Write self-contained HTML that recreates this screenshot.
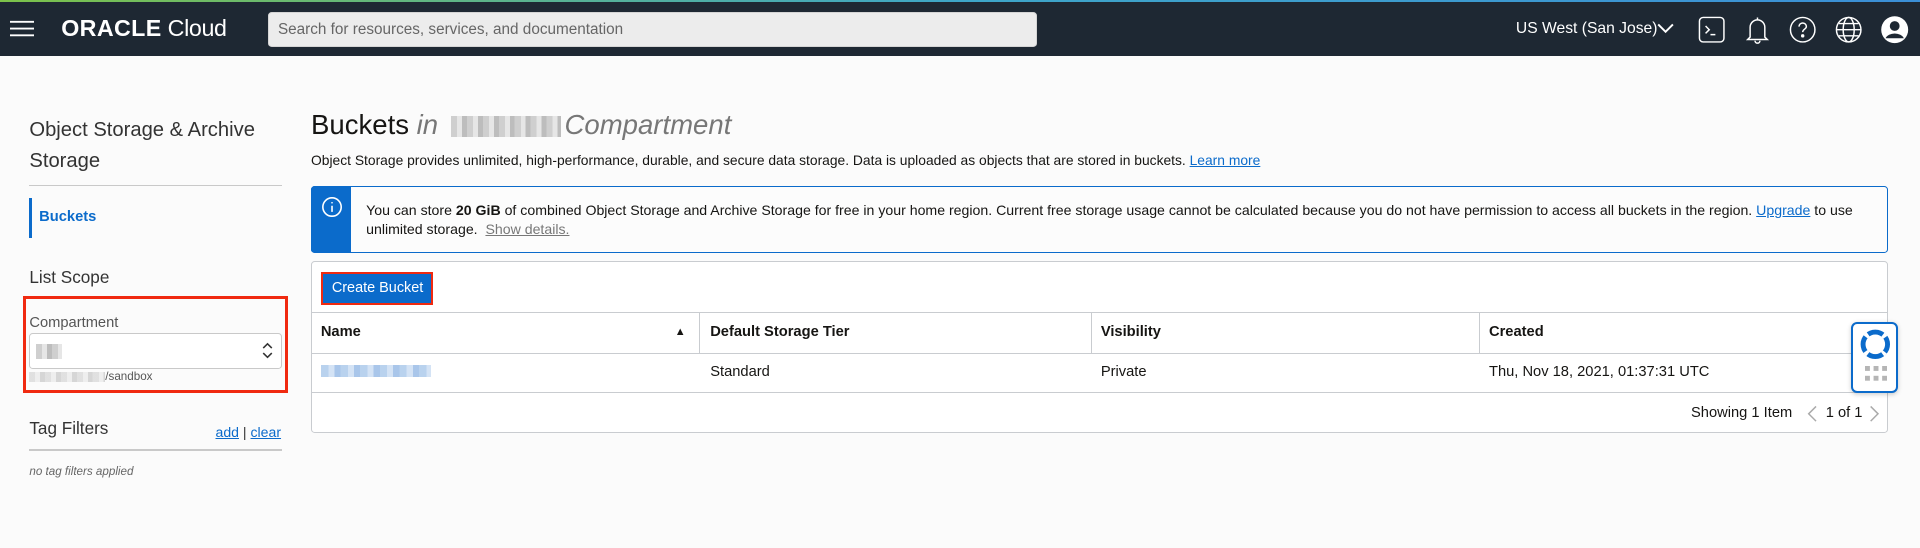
<!DOCTYPE html>
<html><head><meta charset="utf-8">
<style>
*{box-sizing:border-box;margin:0;padding:0}
html,body{width:1920px;height:548px;overflow:hidden;background:#fbfbfb}
#w{width:1568px;height:448px;zoom:1.22449;position:relative;font-family:"Liberation Sans",sans-serif;color:#161513;background:#fbfbfb}
.a{position:absolute;white-space:nowrap}
.top{position:absolute;left:0;top:0;width:1568px;height:46px;background:#1e2833}
.grad{position:absolute;left:0;top:0;width:1568px;height:2px;background:linear-gradient(90deg,#7cc24a,#3ea6c8,#3b8fd6)}
.blur{background:repeating-linear-gradient(90deg,#cfcfcf 0 5px,#e6e6e6 5px 9px,#bdbdbd 9px 13px)}
.bblur{background:repeating-linear-gradient(90deg,#b9d2ee 0 6px,#d4e3f5 6px 11px,#a9c6ea 11px 16px)}
a{color:#0b6bcb}
.th{font-weight:bold;font-size:12px;top:265px}
.td{font-size:12px;top:297px}
</style></head><body><div id="w">
<div class="top"></div><div class="grad"></div>
<svg class="a" style="left:8px;top:16px" width="20" height="14"><path d="M0 1.5h20M0 7h20M0 12.5h20" stroke="#fff" stroke-width="1.5"/></svg>
<div class="a" style="left:50px;top:12px;color:#fff;font-size:19px;font-weight:bold;letter-spacing:0.3px">ORACLE<span style="font-weight:normal;letter-spacing:-0.3px"> Cloud</span></div>
<div class="a" style="left:219px;top:10px;width:628px;height:28px;background:#ececec;border-radius:3px;border:1px solid #d5d5d5"></div>
<div class="a" style="left:227px;top:17px;font-size:12.5px;color:#666">Search for resources, services, and documentation</div>
<div class="a" style="left:1238px;top:16px;font-size:12.8px;color:#fff">US West (San Jose)</div>
<svg class="a" style="left:1353px;top:18px" width="14" height="10"><path d="M1 2l6 6 6-6" stroke="#fff" stroke-width="1.6" fill="none"/></svg>
<svg class="a" style="left:1386px;top:12px" width="24" height="24" fill="none" stroke="#fff" stroke-width="1.2"><rect x="2" y="2" width="20" height="20" rx="3"/><path d="M7 9l3 3-3 3M11 16h4"/></svg>
<svg class="a" style="left:1424px;top:12px" width="22" height="24" fill="none" stroke="#fff" stroke-width="1.2"><path d="M5 18V10a6 6 0 0112 0v8l2 2H3z M11 2v2 M9 21a2 2 0 004 0"/></svg>
<svg class="a" style="left:1460px;top:12px" width="24" height="24" fill="none" stroke="#fff" stroke-width="1.2"><circle cx="12" cy="12" r="10"/><path d="M9 9.5a3 3 0 116 0c0 2-3 2-3 4.5"/><circle cx="12" cy="17" r=".8" fill="#fff"/></svg>
<svg class="a" style="left:1498px;top:12px" width="24" height="24" fill="none" stroke="#fff" stroke-width="1.2"><circle cx="12" cy="12" r="10"/><ellipse cx="12" cy="12" rx="4.5" ry="10"/><path d="M2 12h20M4 7h16M4 17h16"/></svg>
<svg class="a" style="left:1535px;top:12px" width="24" height="24"><circle cx="12" cy="12" r="11" fill="#fff"/><circle cx="12" cy="9" r="4" fill="#1e2833"/><path d="M4.5 19a8 6 0 0115 0" fill="#1e2833"/></svg>

<div class="a" style="left:24px;top:94px;font-size:16.5px;line-height:25px;color:#333;white-space:normal;width:200px">Object Storage &amp; Archive Storage</div>
<div class="a" style="left:24px;top:151px;width:206px;height:1px;background:#c9c9c9"></div>
<div class="a" style="left:24px;top:162px;width:2px;height:32px;background:#0b6bcb"></div>
<div class="a" style="left:32px;top:171px;font-size:12px;font-weight:bold;color:#0b6bcb">Buckets</div>
<div class="a" style="left:24px;top:218px;font-size:14px;color:#333">List Scope</div>
<div class="a" style="left:19px;top:242px;width:216px;height:79px;border:3px solid #f02a10"></div>
<div class="a" style="left:24px;top:257px;font-size:12px;color:#555">Compartment</div>
<div class="a" style="left:24px;top:272px;width:206px;height:29px;background:#fff;border:1px solid #c9c9c9;border-radius:3px"></div>
<div class="a blur" style="left:29px;top:281px;width:22px;height:12px"></div>
<svg class="a" style="left:214px;top:279px" width="9" height="14" fill="none" stroke="#333" stroke-width="1.3"><path d="M1 5l3.5-3.5L8 5M1 9l3.5 3.5L8 9"/></svg>
<div class="a blur" style="left:24px;top:304px;width:62px;height:8px;opacity:.6"></div>
<div class="a" style="left:86px;top:302px;font-size:9.5px;color:#555">/sandbox</div>
<div class="a" style="left:24px;top:341px;font-size:14px;color:#333">Tag Filters</div>
<div class="a" style="left:176px;top:346px;font-size:11.5px;color:#0b6bcb"><u>add</u> <span style="color:#333">|</span> <u>clear</u></div>
<div class="a" style="left:24px;top:367px;width:206px;height:1px;background:#c9c9c9"></div>
<div class="a" style="left:24px;top:380px;font-size:9.5px;font-style:italic;color:#666">no tag filters applied</div>

<div class="a" style="left:254px;top:89px;font-size:22.5px;color:#161513">Buckets <i style="color:#777">in</i></div>
<div class="a blur" style="left:368px;top:95px;width:90px;height:17px"></div>
<div class="a" style="left:461px;top:89px;font-size:22.5px;font-style:italic;color:#777">Compartment</div>
<div class="a" style="left:254px;top:124px;font-size:11.3px;color:#161513">Object Storage provides unlimited, high-performance, durable, and secure data storage. Data is uploaded as objects that are stored in buckets. <a style="text-decoration:underline">Learn more</a></div>

<div class="a" style="left:254px;top:152px;width:1288px;height:55px;background:#fcfcfc;border:1px solid #0b6bcb;border-radius:3px"></div>
<div class="a" style="left:254px;top:152px;width:33px;height:55px;background:#0b6bcb;border-radius:3px 0 0 3px"></div>
<svg class="a" style="left:262px;top:160px" width="18" height="18" fill="none" stroke="#fff" stroke-width="1.3"><circle cx="9" cy="9" r="7.5"/><path d="M9 8v5M9 5v1"/></svg>
<div class="a" style="left:299px;top:164px;font-size:11.55px;line-height:16px;color:#161513">You can store <b>20 GiB</b> of combined Object Storage and Archive Storage for free in your home region. Current free storage usage cannot be calculated because you do not have permission to access all buckets in the region. <a style="text-decoration:underline">Upgrade</a> to use<br>unlimited storage. &nbsp;<span style="color:#777;text-decoration:underline">Show details.</span></div>

<div class="a" style="left:254px;top:213px;width:1288px;height:141px;background:#fff;border:1px solid #c9ccd0;border-radius:3px"></div>
<div class="a" style="left:262px;top:222px;width:92px;height:27px;background:#0b6bcb;border:2px solid #f02a10"></div>
<div class="a" style="left:271px;top:229px;font-size:11.8px;color:#fff">Create Bucket</div>
<div class="a" style="left:254px;top:255px;width:1288px;height:1px;background:#c9ccd0"></div>
<div class="a" style="left:254px;top:288px;width:1288px;height:1px;background:#c9ccd0"></div>
<div class="a" style="left:254px;top:320px;width:1288px;height:1px;background:#c9ccd0"></div>
<div class="a" style="left:571px;top:255px;width:1px;height:33px;background:#c9ccd0"></div>
<div class="a" style="left:891px;top:255px;width:1px;height:33px;background:#c9ccd0"></div>
<div class="a" style="left:1208px;top:255px;width:1px;height:33px;background:#c9ccd0"></div>
<div class="a th" style="left:262px">Name</div>
<div class="a" style="left:551px;top:266px;font-size:9px">&#9650;</div>
<div class="a th" style="left:580px">Default Storage Tier</div>
<div class="a th" style="left:899px">Visibility</div>
<div class="a th" style="left:1216px">Created</div>
<div class="a bblur" style="left:262px;top:298px;width:90px;height:10px"></div>
<div class="a td" style="left:580px">Standard</div>
<div class="a td" style="left:899px">Private</div>
<div class="a td" style="left:1216px">Thu, Nov 18, 2021, 01:37:31 UTC</div>
<div class="a" style="left:1381px;top:331px;font-size:12px">Showing 1 Item</div>
<svg class="a" style="left:1474px;top:330px" width="12" height="16" fill="none" stroke="#aaa" stroke-width="1.2"><path d="M9 2L3 8l6 6"/></svg>
<div class="a" style="left:1491px;top:331px;font-size:12px">1 of 1</div>
<svg class="a" style="left:1525px;top:330px" width="12" height="16" fill="none" stroke="#aaa" stroke-width="1.2"><path d="M3 2l6 6-6 6"/></svg>

<div class="a" style="left:1512px;top:263px;width:38px;height:58px;background:#fff;border:2px solid #0b6bcb;border-radius:5px;box-shadow:0 1px 4px rgba(0,0,0,.2)"></div>
<svg class="a" style="left:1519px;top:269px" width="25" height="25"><circle cx="12.5" cy="12.5" r="10" fill="none" stroke="#0b6bcb" stroke-width="4"/><circle cx="12.5" cy="12.5" r="10" fill="none" stroke="#fff" stroke-width="4.2" stroke-dasharray="3 12.7" stroke-dashoffset="1.5" transform="rotate(45 12.5 12.5)"/></svg>
<svg class="a" style="left:1523px;top:299px" width="18" height="14" fill="#b5b5b5"><rect x="0" y="0" width="4" height="4"/><rect x="7" y="0" width="4" height="4"/><rect x="14" y="0" width="4" height="4"/><rect x="0" y="8" width="4" height="4"/><rect x="7" y="8" width="4" height="4"/><rect x="14" y="8" width="4" height="4"/></svg>
</div></body></html>
